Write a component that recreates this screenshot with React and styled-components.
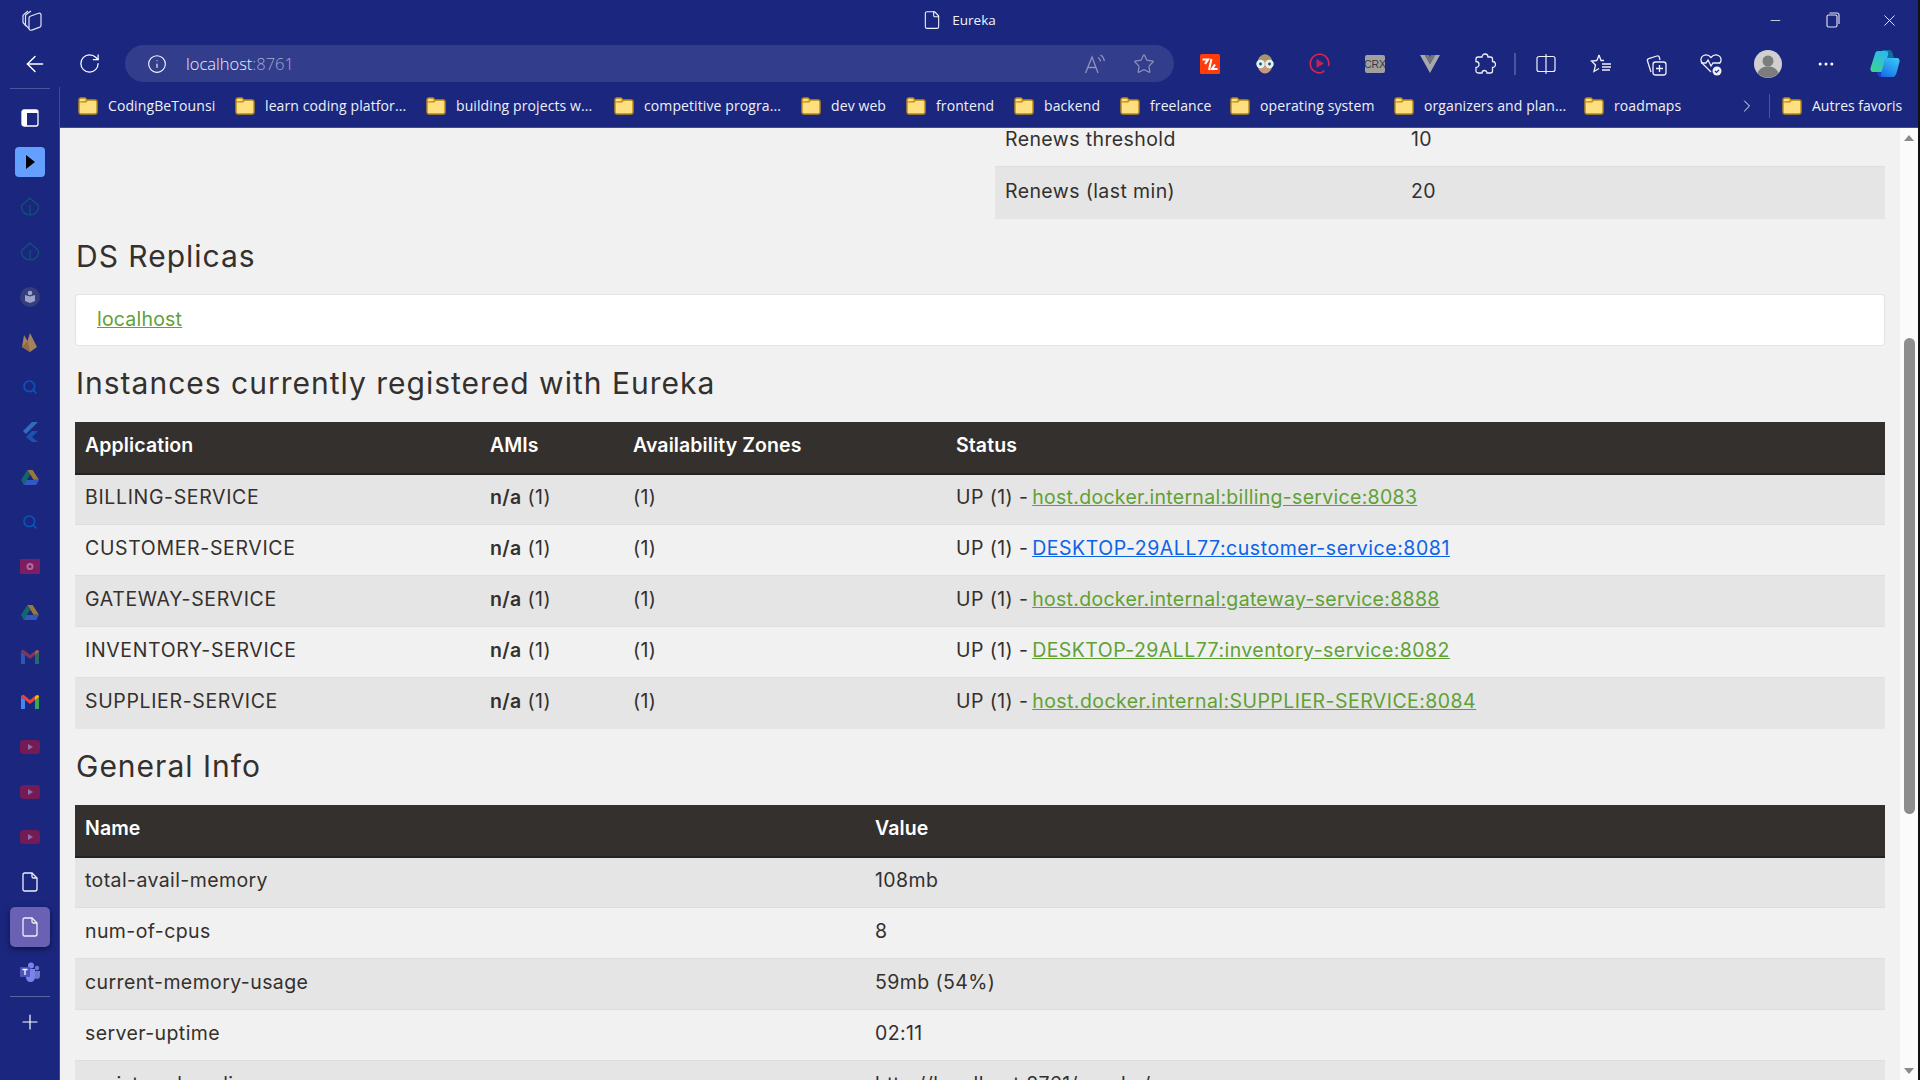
import React from 'react'
import styled, { createGlobalStyle } from 'styled-components'
import {
  ArrowLeft, RotateCw, Info, Star, Plus, Search, File, Minus, X, ChevronRight, MoreHorizontal,
} from 'lucide-react'

const GlobalStyle = createGlobalStyle`
  html, body { margin: 0; padding: 0; overflow: hidden; background: #111; }
  * { box-sizing: border-box; }
`

const NAVY = '#1b277f'
const PAGE_FONT = `Inter, "Open Sans", sans-serif`
const CHROME_FONT = `"Open Sans", "Noto Sans", sans-serif`

const Screen = styled.div`
  width: 1920px;
  height: 1080px;
  display: flex;
  overflow: hidden;
`

const Window = styled.div`
  flex: 1;
  min-width: 0;
  display: flex;
  flex-direction: column;
  background: ${NAVY};
  color: #fff;
  font-family: ${CHROME_FONT};
`

const WindowEdge = styled.div`
  width: 2px;
  flex: none;
  background: #111;
`

const TitleBar = styled.div`
  height: 40px;
  flex: none;
  display: grid;
  grid-template-columns: 1fr auto 1fr;
  align-items: center;
`

const WorkspaceSlot = styled.div`
  padding-left: 20px;
  display: flex;
`

const Title = styled.div`
  display: flex;
  align-items: center;
  gap: 10px;
  font-size: 13.5px;
  color: #f1f2f8;
`

const WindowControls = styled.div`
  display: flex;
  justify-content: flex-end;
`

const ControlButton = styled.div`
  width: 57px;
  height: 40px;
  display: flex;
  align-items: center;
  justify-content: center;
`

const Toolbar = styled.div`
  height: 47px;
  flex: none;
  display: flex;
  align-items: center;
  padding-left: 7px;
`

const NavButton = styled.div`
  width: 55px;
  height: 40px;
  display: flex;
  align-items: center;
  justify-content: center;
`

const UrlBar = styled.div`
  width: 1049px;
  height: 37px;
  margin: 0 8px 0 8px;
  border-radius: 19px;
  background: #323d8c;
  display: flex;
  align-items: center;
  padding: 0 6px 0 22px;
  font-size: 16.5px;
  font-weight: 300;
`

const UrlText = styled.span`
  margin-left: 19px;
  flex: 1;
  color: #eceef8;
`

const UrlPort = styled.span`
  color: #a5aad0;
`

const UrlAction = styled.div`
  width: 49px;
  display: flex;
  justify-content: center;
`

const ToolSlot = styled.div`
  width: ${p => p.$w || 55}px;
  flex: none;
  display: flex;
  align-items: center;
  justify-content: center;
`

const ToolDivider = styled.div`
  width: 2px;
  height: 22px;
  margin: 0 2px 0 2px;
  background: #4c5599;
`

const Body = styled.div`
  flex: 1;
  min-height: 0;
  display: flex;
`

const Sidebar = styled.div`
  width: 60px;
  flex: none;
  border-right: 1px solid #3f4a98;
  position: relative;
  padding-top: 9px;
  display: flex;
  flex-direction: column;
  align-items: center;
  &::before {
    content: '';
    position: absolute;
    top: 1px;
    left: 10px;
    width: 40px;
    height: 1px;
    background: #4c5599;
  }
`

const SideItem = styled.div`
  width: 100%;
  height: ${p => p.$h || 45}px;
  flex: none;
  display: flex;
  align-items: center;
  justify-content: center;
`

const PlayTile = styled.div`
  width: 30px;
  height: 30px;
  border-radius: 4px;
  background: #64a0ff;
  display: flex;
  align-items: center;
  justify-content: center;
`

const ActiveTile = styled.div`
  width: 40px;
  height: 40px;
  border-radius: 5px;
  background: #6a60b4;
  box-shadow: 0 2px 6px rgba(0, 0, 20, 0.55);
  display: flex;
  align-items: center;
  justify-content: center;
`

const SideRule = styled.div`
  width: 40px;
  height: 1px;
  flex: none;
  background: #5a639f;
  margin: 2px 0;
`

const ContentColumn = styled.div`
  flex: 1;
  min-width: 0;
  display: flex;
  flex-direction: column;
`

const BookmarksBar = styled.div`
  height: 41px;
  flex: none;
  display: flex;
  align-items: center;
  border-bottom: 1px solid #3f4a98;
  padding: 0 0 3px 18px;
  font-size: 14px;
  color: #eef0f8;
`

const Bookmark = styled.div`
  width: ${p => p.$w}px;
  flex: none;
  display: flex;
  align-items: center;
  gap: 10px;
  white-space: nowrap;
  letter-spacing: 0.1px;
`

const BookmarksEnd = styled.div`
  display: flex;
  align-items: center;
  gap: 10px;
  margin-left: 12px;
  white-space: nowrap;
`

const BarDivider = styled.div`
  width: 1px;
  height: 24px;
  margin-right: 2px;
  background: #4c5599;
`

const PageRow = styled.div`
  flex: 1;
  min-height: 0;
  display: flex;
`

const Main = styled.main`
  flex: 1;
  min-width: 0;
  overflow: hidden;
  background: #f1f1f1;
  color: #34302d;
  padding: 0 15px;
  font-family: ${PAGE_FONT};
`

const Scrollbar = styled.div`
  width: 18px;
  flex: none;
  background: #fbfbfb;
  display: flex;
  flex-direction: column;
  align-items: center;
  padding: 7px 0 6px;
`

const ScrollArrow = styled.div`
  width: 0;
  height: 0;
  border-left: 5.5px solid transparent;
  border-right: 5.5px solid transparent;
  ${p => (p.$down ? 'border-top: 6px solid #8a8a8a; margin-top: auto;' : 'border-bottom: 6px solid #8a8a8a;')}
`

const ScrollThumb = styled.div`
  width: 11px;
  height: 476px;
  margin-top: 197px;
  border-radius: 6px;
  background: #8d8d8d;
`

const SummaryWrap = styled.div`
  margin: -13px 0 0 920px;
`

const SectionHeading = styled.h1`
  margin: ${p => p.$top}px 0 ${p => p.$bottom}px;
  padding-left: 1px;
  height: 40px;
  font-weight: 400;
  font-size: 30px;
  line-height: 40px;
  letter-spacing: 1px;
  color: #34302d;
`

const Panel = styled.div`
  height: 52px;
  background: #fff;
  border: 1px solid #e3e3e3;
  border-radius: 4px;
  display: flex;
  align-items: center;
  padding: 0 0 2px 21px;
  font-size: 19.5px;
  letter-spacing: 0.2px;
`

const Table = styled.table`
  width: 100%;
  border-collapse: collapse;
  table-layout: fixed;
  font-size: 19.5px;
  letter-spacing: 0.4px;
`

const HeadCell = styled.th`
  height: 52px;
  padding: 0 10px 4px;
  text-align: left;
  font-weight: 600;
  letter-spacing: 0.1px;
  color: #fff;
  background: #34302d;
  border-bottom: 2px solid #25221f;
  width: ${p => (p.$w ? `${p.$w}px` : 'auto')};
`

const Row = styled.tr`
  background: ${p => (p.$shade ? '#e5e5e5' : '#f1f1f1')};
`

const Cell = styled.td`
  width: ${p => (p.$w ? `${p.$w}px` : 'auto')};
  height: ${p => p.$h || 51}px;
  padding: 0 10px 4px;
  color: #34302d;
  border-top: 1px solid #dddde2;
  white-space: nowrap;
`

const ServiceName = styled.span`
  letter-spacing: 0.65px;
`

const Strong = styled.b`
  font-weight: 600;
`

const ServiceLink = styled.a`
  color: ${p => (p.$blue ? '#0d63e8' : '#5fa134')};
  text-decoration: underline;
`

const InstanceLink = styled(ServiceLink)`
  margin-left: -2px;
  letter-spacing: ${p => p.$track}px;
`

const IconFaded = styled.svg`
  opacity: ${p => p.$o ?? 1};
`

const Workspaces = () => (
  <svg width="24" height="24" viewBox="0 0 24 24" fill="none" stroke="#dfe2f2" strokeWidth="1.200">
    <path d="M6 18 3 14.500V8c0-.5.2-1 .6-1.300L8 3" />
    <path d="M9 20.500 5.500 17V8c0-.6.3-1.100.7-1.400L11 3" />
    <path d="M9 10c0-.8.500-1.500 1.200-1.700l8.300-3.100c1-.4 2.500.3 2.500 1.500v10.600c0 .8-.5 1.500-1.200 1.800l-8 3c-1.300.5-2.800-.4-2.800-1.700z" />
  </svg>
)

const Restore = () => (
  <svg width="14" height="16" viewBox="0 0 14 16" fill="none" stroke="#e6e8f4" strokeWidth="1.100">
    <rect x="1" y="3" width="10" height="12" rx="1.500" />
    <path d="M3.500 1h7.500A2 2 0 0 1 13 3v9" />
  </svg>
)

const ReadAloud = () => (
  <svg width="22" height="22" viewBox="0 0 22 22" fill="none" stroke="#8f94bd" strokeWidth="1.300">
    <path d="M1.500 20 8 4l6 16M4 14.500h8" />
    <path d="M14 4.500c1.600 1 2.400 2.300 2.600 4M16.500 2c2.400 1.500 3.500 3.300 3.800 6" />
  </svg>
)

const CodeBadge = () => (
  <svg width="20" height="20" viewBox="0 0 20 20">
    <rect width="20" height="20" rx="1.500" fill="#ff3c0a" />
    <path d="M2.500 5.500h5.500L5 10" fill="none" stroke="#fff" strokeWidth="2.200" />
    <path d="M11.500 5 9 16" stroke="#fff" strokeWidth="2" />
    <path d="M17.500 15h-5.500L15 10.500" fill="none" stroke="#fff" strokeWidth="2.200" />
  </svg>
)

const GlassesFace = () => (
  <svg width="20" height="20" viewBox="0 0 20 20">
    <ellipse cx="10" cy="10" rx="7.500" ry="9.500" fill="#c8977c" />
    <path d="M2.500 8C3.500 3 6.500.5 10 .5s6.500 2.500 7.500 7.500C13 5.500 7 5.500 2.500 8z" fill="#a99468" />
    <circle cx="5.500" cy="10" r="3.600" fill="#d5f1f3" stroke="#e8f7f8" strokeWidth="1.200" />
    <circle cx="14.500" cy="10" r="3.600" fill="#d5f1f3" stroke="#e8f7f8" strokeWidth="1.200" />
    <circle cx="5.500" cy="10" r="1.400" fill="#2d4a58" />
    <circle cx="14.500" cy="10" r="1.400" fill="#2d4a58" />
  </svg>
)

const RecordPlay = () => (
  <svg width="21" height="21" viewBox="0 0 21 21" fill="none">
    <path d="M13 19.500a9.300 9.300 0 1 1 6.500-6.500" stroke="#d8264f" strokeWidth="1.600" />
    <path d="M15 17.500a7 7 0 0 1-2 2" stroke="#d8264f" strokeWidth="1.600" />
    <path d="M7.500 6 15 10.500 7.500 15z" fill="#c42252" />
  </svg>
)

const CrxBadge = () => (
  <svg width="20" height="18" viewBox="0 0 20 18">
    <rect width="20" height="18" rx="2" fill="#a0a0a0" />
    <text x="10" y="13" textAnchor="middle" fontSize="10.500" fontFamily="Liberation Sans, sans-serif" fill="#3a3a3a">CRX</text>
  </svg>
)

const VShield = () => (
  <svg width="20" height="19" viewBox="0 0 20 19">
    <path d="M0 1h5l5 9 5-9h5L10 19z" fill="#a8a8ac" />
    <path d="M5 1h4l1 2 1-2h4l-5 9z" fill="#74747c" />
  </svg>
)

const PuzzlePiece = () => (
  <svg width="22" height="23" viewBox="0 0 22 23" fill="none" stroke="#eef0f8" strokeWidth="1.300">
    <path d="M8 5a3 3 0 0 1 6 0h2.500a2 2 0 0 1 2 2v2.500a3 3 0 0 1 0 6V19a2 2 0 0 1-2 2h-3.500a2.500 2.500 0 0 0-5 0H4a2 2 0 0 1-2-2v-3.500a2.500 2.500 0 0 0 0-6V7a2 2 0 0 1 2-2z" />
  </svg>
)

const SplitScreen = () => (
  <svg width="20" height="22" viewBox="0 0 20 22" fill="none" stroke="#eef0f8" strokeWidth="1.200">
    <path d="M10 1v20" />
    <path d="M10 3.500H3a2 2 0 0 0-2 2v11a2 2 0 0 0 2 2h7M10 3.500h7a2 2 0 0 1 2 2v11a2 2 0 0 1-2 2h-7" />
  </svg>
)

const Favorites = () => (
  <svg width="22" height="21" viewBox="0 0 22 21" fill="none" stroke="#eef0f8" strokeWidth="1.300">
    <path d="M9 2 11 7.500h3M7 7.500 1.500 8l4 4-1.500 6.500 5-3" />
    <path d="M9 2 7 7.500" />
    <path d="M12 11h9M12 14h9M12 17h8" />
  </svg>
)

const Collections = () => (
  <svg width="22" height="24" viewBox="0 0 22 24" fill="none" stroke="#eef0f8" strokeWidth="1.300">
    <path d="M6 20 2.500 9c-.3-1 .2-2 1.200-2.300L12 4c1-.3 2 .2 2.300 1.200L15 8" />
    <rect x="8" y="10" width="13" height="13" rx="2.500" />
    <path d="M14.500 13v7M11 16.500h7" />
  </svg>
)

const HealthHeart = () => (
  <svg width="24" height="24" viewBox="0 0 24 24" fill="none">
    <path d="M12 20 3.500 11.500C1 9 1.500 5 4.500 3.500c2.500-1.200 5.500-.5 7.500 2 2-2.500 5-3.200 7.500-2 3 1.500 3.500 5.500 1 8" stroke="#eef0f8" strokeWidth="1.300" />
    <path d="M2 11h5l2-3 3 6 2-3h7" stroke="#eef0f8" strokeWidth="1.300" />
    <circle cx="18" cy="19" r="4.500" fill="#eef0f8" />
    <path d="m16 19 1.500 1.500 2.500-2.700" stroke={NAVY} strokeWidth="1.200" />
  </svg>
)

const Profile = () => (
  <svg width="28" height="28" viewBox="0 0 28 28">
    <circle cx="14" cy="14" r="14" fill="#d0d0d0" />
    <circle cx="14" cy="11" r="5.500" fill="#7c7c7c" />
    <path d="M3.500 23c2-5 6-6.500 10.500-6.500S22.500 18 24.500 23a14 14 0 0 1-21 0z" fill="#7c7c7c" />
  </svg>
)

const Copilot = () => (
  <svg width="30" height="27" viewBox="0 0 30 27">
    <defs>
      <linearGradient id="cpA" x1="0.700" y1="0" x2="0.200" y2="1">
        <stop offset="0" stopColor="#2fb7ef" />
        <stop offset="1" stopColor="#38d68e" />
      </linearGradient>
      <linearGradient id="cpB" x1="0.800" y1="0" x2="0.200" y2="1">
        <stop offset="0" stopColor="#38c6f7" />
        <stop offset="1" stopColor="#1a6fe8" />
      </linearGradient>
    </defs>
    <path d="M12 0h7c2 0 3 1 3.500 3l2 7H14z" fill="#0e6f9c" />
    <path d="M7 22h9l2 5h-7c-2 0-3-1-3.500-3z" fill="#1d3fc8" />
    <path d="M8 1h8c2 0 2.500 2 2 4l-4 14c-.5 1.500-2 3-3 3H3c-2 0-3-2-2.500-4L5 4c.4-1.800 1.500-3 3-3z" fill="url(#cpA)" />
    <path d="M17 8h10c2 0 3 2 2.500 4l-3 11c-.5 2-2 4-4 4H13c-2 0-2.500-1.500-2-3l3.500-13c.4-1.800 1.200-3 2.500-3z" fill="url(#cpB)" />
  </svg>
)

const Folder = () => (
  <svg width="20" height="18" viewBox="0 0 20 18">
    <path d="M1 3a2 2 0 0 1 2-2h4l2 2h8a2 2 0 0 1 2 2v10a2 2 0 0 1-2 2H3a2 2 0 0 1-2-2z" fill="#ffdf80" stroke="#b78a14" strokeWidth="1.400" />
    <path d="M1 5h7l1.500-2" fill="#e3ac25" stroke="#b78a14" strokeWidth="1.200" />
  </svg>
)

const Layout = () => (
  <svg width="18" height="18" viewBox="0 0 18 18">
    <rect x="1" y="1" width="16" height="16" rx="2" fill="none" stroke="#fff" strokeWidth="1.300" />
    <path d="M1 3a2 2 0 0 1 2-2h12a2 2 0 0 1 2 2v1H6v13H3a2 2 0 0 1-2-2z" fill="#fff" />
  </svg>
)

const Leaf = () => (
  <IconFaded $o={0.7} width="20" height="20" viewBox="0 0 20 20" fill="none" stroke="#0d6a70" strokeWidth="1.200">
    <path d="M10 1 1.500 8.500C1 13 4 18 10 18s9-5 8.500-9.500zM10 8v10" />
  </IconFaded>
)

const RoundBook = () => (
  <svg width="20" height="20" viewBox="0 0 20 20">
    <circle cx="10" cy="10" r="10" fill="#353d7d" />
    <path d="M5 8l5 1.500L15 8v6l-5 2-5-2z" fill="#9fa3cc" />
    <circle cx="10" cy="6" r="2.300" fill="#9fa3cc" />
  </svg>
)

const Firebase = () => (
  <svg width="15" height="20" viewBox="0 0 15 20">
    <path d="M0 15 2 3l3.500 6L8 1l7 14-7 5z" fill="#a5825a" />
    <path d="M0 15 5.500 9 8 20z" fill="#8f6a4c" />
  </svg>
)

const Flutter = () => (
  <IconFaded $o={0.55} width="18" height="20" viewBox="0 0 18 20">
    <path d="M11 0h6L5 12l-3-3z" fill="#43a6ee" />
    <path d="M11 9h6l-6 6 6 5h-6l-6-5z" fill="#1e74d2" />
  </IconFaded>
)

const Drive = () => (
  <IconFaded $o={0.55} width="18" height="16" viewBox="0 0 20 18">
    <path d="M7 1h6l7 11h-6z" fill="#fbbc04" />
    <path d="M7 1 0 12.500 3 18l7-11.500z" fill="#0f9d58" />
    <path d="M3 18h14l3-5.500H6z" fill="#4285f4" />
  </IconFaded>
)

const RedCam = () => (
  <svg width="20" height="15" viewBox="0 0 20 15">
    <rect width="20" height="15" rx="1" fill="#7d1e63" />
    <circle cx="10" cy="7.500" r="3.500" fill="#b16a9c" />
    <circle cx="10" cy="7.500" r="1.500" fill="#7d1e63" />
  </svg>
)

const Gmail = ({ o }) => (
  <IconFaded $o={o} width="18" height="14" viewBox="0 0 18 14">
    <path d="M0 2v12h4V5z" fill="#4285f4" />
    <path d="M14 5v9h4V2z" fill="#34a853" />
    <path d="M0 2c0-2 2.500-2.500 3.500-1.500L9 5l5.500-4.500C15.500-.5 18 0 18 2l-4 3-5 4-5-4z" fill="#ea4335" />
    <path d="M14 5l4-3c0-1-.8-2-1.800-2L14 2z" fill="#fbbc04" />
  </IconFaded>
)

const YouTube = () => (
  <svg width="20" height="14" viewBox="0 0 20 14">
    <rect width="20" height="14" rx="3.500" fill="#741a55" />
    <path d="M8 4l5 3-5 3z" fill="#8f6fa8" />
  </svg>
)

const PlainDoc = () => (
  <svg width="16" height="20" viewBox="0 0 16 20" fill="none" stroke="#eef0f8" strokeWidth="1.300">
    <path d="M2.500 1H10l5 5v11a2 2 0 0 1-2 2H2.500a1.500 1.500 0 0 1-1.500-1.500v-15A1.500 1.500 0 0 1 2.500 1z" />
    <path d="M10 1v3.500A1.500 1.500 0 0 0 11.500 6H15" />
  </svg>
)

const Teams = () => (
  <svg width="20" height="20" viewBox="0 0 20 20">
    <circle cx="17" cy="6" r="2.200" fill="#6f75c8" />
    <path d="M14 9h6v5c0 2-1.500 3-3 3s-3-1-3-3z" fill="#6f75c8" />
    <circle cx="11" cy="3.500" r="3" fill="#7b83eb" />
    <path d="M6 7h9v8c0 3-2 5-4.500 5S6 18 6 15z" fill="#7b83eb" />
    <rect y="5" width="10" height="10" rx="1" fill="#4b53bc" />
    <path d="M2.500 7.500h5M5 7.500V13" stroke="#fff" strokeWidth="1.300" />
  </svg>
)

const bookmarks = [
  { label: 'CodingBeTounsi', w: 157 },
  { label: 'learn coding platfor...', w: 191 },
  { label: 'building projects w...', w: 188 },
  { label: 'competitive progra...', w: 187 },
  { label: 'dev web', w: 105 },
  { label: 'frontend', w: 108 },
  { label: 'backend', w: 106 },
  { label: 'freelance', w: 110 },
  { label: 'operating system', w: 164 },
  { label: 'organizers and plan...', w: 190 },
  { label: 'roadmaps', w: 153 },
]

const instances = [
  { name: 'BILLING-SERVICE', host: 'host.docker.internal:billing-service:8083', track: 0.3, shade: true },
  { name: 'CUSTOMER-SERVICE', host: 'DESKTOP-29ALL77:customer-service:8081', track: 0.55, blue: true },
  { name: 'GATEWAY-SERVICE', host: 'host.docker.internal:gateway-service:8888', track: 0.3, shade: true },
  { name: 'INVENTORY-SERVICE', host: 'DESKTOP-29ALL77:inventory-service:8082', track: 0.45 },
  { name: 'SUPPLIER-SERVICE', host: 'host.docker.internal:SUPPLIER-SERVICE:8084', track: 0.45, shade: true },
]

const generalInfo = [
  ['total-avail-memory', '108mb'],
  ['num-of-cpus', '8'],
  ['current-memory-usage', '59mb (54%)'],
  ['server-uptime', '02:11'],
  ['registered-replicas', 'http://localhost:8761/eureka/'],
]

const sideIcons = [
  <PlayTile><svg width="12" height="16" viewBox="0 0 12 16"><path d="M2 1l9 7-9 7z" fill="#000" /></svg></PlayTile>,
  <Leaf />,
  <Leaf />,
  <RoundBook />,
  <Firebase />,
  <Search size={16} color="#0c54b8" strokeWidth={2.4} />,
  <Flutter />,
  <Drive />,
  <Search size={16} color="#0c54b8" strokeWidth={2.4} />,
  <RedCam />,
  <Drive />,
  <Gmail o={0.5} />,
  <Gmail />,
  <YouTube />,
  <YouTube />,
  <YouTube />,
  <PlainDoc />,
  <ActiveTile><PlainDoc /></ActiveTile>,
  <Teams />,
]

export default function App() {
  return (
    <Screen>
      <GlobalStyle />
      <Window>
        <TitleBar>
          <WorkspaceSlot><Workspaces /></WorkspaceSlot>
          <Title><File size={20} strokeWidth={1.3} />Eureka</Title>
          <WindowControls>
            <ControlButton><Minus size={15} strokeWidth={1.2} /></ControlButton>
            <ControlButton><Restore /></ControlButton>
            <ControlButton><X size={19} strokeWidth={1.1} /></ControlButton>
          </WindowControls>
        </TitleBar>

        <Toolbar>
          <NavButton><ArrowLeft size={26} strokeWidth={1.3} /></NavButton>
          <NavButton><RotateCw size={23} strokeWidth={1.3} /></NavButton>
          <UrlBar>
            <Info size={20} strokeWidth={1.3} />
            <UrlText>localhost<UrlPort>:8761</UrlPort></UrlText>
            <UrlAction><ReadAloud /></UrlAction>
            <UrlAction><Star size={22} strokeWidth={1.3} color="#8f94bd" /></UrlAction>
          </UrlBar>
          <ToolSlot><CodeBadge /></ToolSlot>
          <ToolSlot><GlassesFace /></ToolSlot>
          <ToolSlot><RecordPlay /></ToolSlot>
          <ToolSlot><CrxBadge /></ToolSlot>
          <ToolSlot><VShield /></ToolSlot>
          <ToolSlot><PuzzlePiece /></ToolSlot>
          <ToolDivider />
          <ToolSlot><SplitScreen /></ToolSlot>
          <ToolSlot><Favorites /></ToolSlot>
          <ToolSlot><Collections /></ToolSlot>
          <ToolSlot><HealthHeart /></ToolSlot>
          <ToolSlot $w={59}><Profile /></ToolSlot>
          <ToolSlot $w={57}><MoreHorizontal size={20} strokeWidth={1.6} /></ToolSlot>
          <ToolSlot $w={61}><Copilot /></ToolSlot>
        </Toolbar>

        <Body>
          <Sidebar>
            <SideItem $h={43}><Layout /></SideItem>
            {sideIcons.map((icon, i) => <SideItem key={i}>{icon}</SideItem>)}
            <SideRule />
            <SideItem><Plus size={24} strokeWidth={1.2} /></SideItem>
          </Sidebar>

          <ContentColumn>
            <BookmarksBar>
              {bookmarks.map(b => (
                <Bookmark key={b.label} $w={b.w}><Folder />{b.label}</Bookmark>
              ))}
              <ChevronRight size={20} strokeWidth={1.2} />
              <BookmarksEnd>
                <BarDivider />
                <Folder />
                Autres favoris
              </BookmarksEnd>
            </BookmarksBar>

            <PageRow>
              <Main>
                <SummaryWrap>
                  <Table>
                    <tbody>
                      <Row>
                        <Cell $w={406}>Renews threshold</Cell>
                        <Cell>10</Cell>
                      </Row>
                      <Row $shade>
                        <Cell $h={52}>Renews (last min)</Cell>
                        <Cell $h={52}>20</Cell>
                      </Row>
                    </tbody>
                  </Table>
                </SummaryWrap>

                <SectionHeading $top={17} $bottom={18}>DS Replicas</SectionHeading>
                <Panel><ServiceLink>localhost</ServiceLink></Panel>
                <SectionHeading $top={17} $bottom={19}>Instances currently registered with Eureka</SectionHeading>
                <Table>
                  <thead>
                    <tr>
                      <HeadCell $w={405}>Application</HeadCell>
                      <HeadCell $w={143}>AMIs</HeadCell>
                      <HeadCell $w={323}>Availability Zones</HeadCell>
                      <HeadCell>Status</HeadCell>
                    </tr>
                  </thead>
                  <tbody>
                    {instances.map(row => (
                      <Row key={row.name} $shade={row.shade}>
                        <Cell><ServiceName>{row.name}</ServiceName></Cell>
                        <Cell><Strong>n/a</Strong> (1)</Cell>
                        <Cell>(1)</Cell>
                        <Cell>UP (1) - <InstanceLink $blue={row.blue} $track={row.track}>{row.host}</InstanceLink></Cell>
                      </Row>
                    ))}
                  </tbody>
                </Table>

                <SectionHeading $top={17} $bottom={19}>General Info</SectionHeading>
                <Table>
                  <thead>
                    <tr>
                      <HeadCell $w={790}>Name</HeadCell>
                      <HeadCell>Value</HeadCell>
                    </tr>
                  </thead>
                  <tbody>
                    {generalInfo.map((row, i) => (
                      <Row key={row[0]} $shade={i % 2 === 0}>
                        <Cell>{row[0]}</Cell>
                        <Cell>{row[1]}</Cell>
                      </Row>
                    ))}
                  </tbody>
                </Table>
              </Main>
              <Scrollbar>
                <ScrollArrow />
                <ScrollThumb />
                <ScrollArrow $down />
              </Scrollbar>
            </PageRow>
          </ContentColumn>
        </Body>
      </Window>
      <WindowEdge />
    </Screen>
  )
}
